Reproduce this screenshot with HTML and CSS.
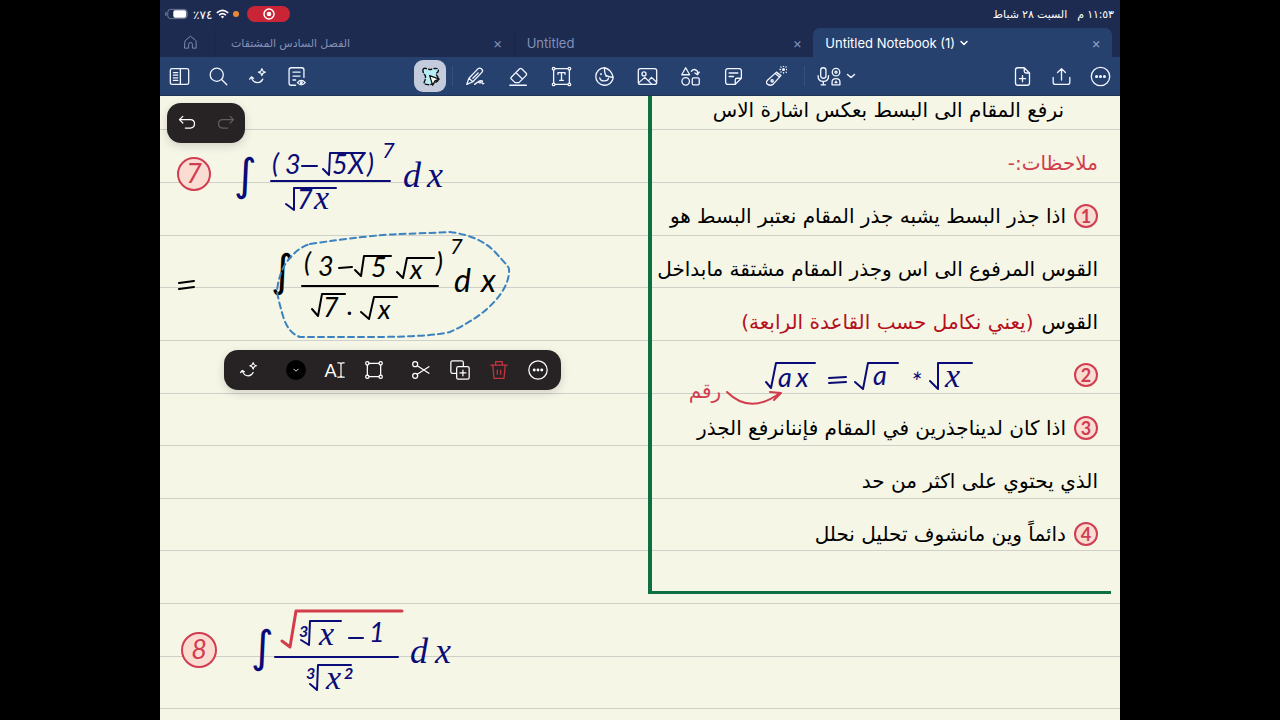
FILE: index.html
```
<!DOCTYPE html>
<html lang="ar">
<head>
  <meta charset="UTF-8">
  <meta name="viewport" content="width=device-width, initial-scale=1">
  <title>Untitled Notebook (1)</title>
  <link rel="stylesheet" href="styles.css">
</head>
<body>

  <div class="app">

    <!-- Status bar -->
    <div class="status">
      <div class="status-side">
        <svg class="battery" viewBox="0 0 26 12"><rect x="3" y="1" width="21" height="10" rx="3" fill="none" stroke="#77809a"/><rect x="9" y="2" width="14" height="8" rx="2" fill="#fff"/><path d="M1 4v4" stroke="#77809a" stroke-width="1.5"/></svg>
        <span dir="rtl">٧٤٪</span>
        <svg class="wifi" viewBox="0 0 16 12"><g fill="none" stroke="#fff" stroke-width="2"><path d="M1 4.500Q8 -1.500 15 4.500"/><path d="M3.800 7.300Q8 3.700 12.200 7.300"/></g><path d="M5.800 9.200Q8 7.600 10.200 9.200L8 11.500Z" fill="#fff"/></svg>
        <span class="dot"></span>
        <span class="rec"><svg viewBox="0 0 12 12"><circle cx="6" cy="6" r="5" fill="none" stroke="#fff" stroke-width="1.500"/><circle cx="6" cy="6" r="2.300" fill="#fff"/></svg></span>
      </div>
      <div class="status-side date" dir="rtl">
        <span>١١:٥٣ م</span>
        <span>السبت ٢٨ شباط</span>
      </div>
    </div>

    <!-- Tabs -->
    <nav class="tabs">
      <button class="home" aria-label="Home"><svg viewBox="0 0 24 24"><path d="M3 10.500Q3 9 4.500 8L12 2l7.500 6Q21 9 21 10.500V21h-6v-6a3 3 0 0 0-6 0v6H3Z"/></svg></button>
      <div class="tab">
        <a href="#" class="tab-name ar" dir="rtl">الفصل السادس المشتقات</a>
        <button class="close" aria-label="Close">×</button>
      </div>
      <div class="tab">
        <a href="#" class="tab-name">Untitled</a>
        <button class="close" aria-label="Close">×</button>
      </div>
      <div class="tab active">
        <a href="#" class="tab-name">Untitled Notebook (1)</a>
        <svg class="chevron" viewBox="0 0 10 10"><path d="m2 3.500 3 3 3-3"/></svg>
        <button class="close" aria-label="Close">×</button>
      </div>
    </nav>

    <!-- Toolbar -->
    <div class="toolbar">
      <div class="tools left">
        <button aria-label="Sidebar"><svg viewBox="0 0 24 24"><rect x="1.500" y="3" width="21" height="18" rx="2"/><path d="M13 3v18M5 7.500h5M5 10.500h5M5 13.500h5M5 16.500h5"/></svg></button>
        <button aria-label="Search"><svg viewBox="0 0 24 24"><circle cx="10" cy="10" r="7.500"/><path d="m15.500 15.500 6 6"/></svg></button>
        <button aria-label="AI"><svg viewBox="0 0 24 24"><path d="m3 15 2-2.500 2.500 1.500M5 13q2 6 7 6 4 0 6-4"/><path d="M17 3q.5 3.500 4 4-3.500.5-4 4-.5-3.500-4-4 3.500-.5 4-4Z" stroke-width="1.300"/></svg></button>
        <button aria-label="Document outline"><svg viewBox="0 0 24 24"><path d="M11 22H6a2.500 2.500 0 0 1-2.500-2.500v-15A2.500 2.500 0 0 1 6 2h12a2.500 2.500 0 0 1 2.500 2.500V13M8 7h8M8 11.500h8M8 16h3"/><path d="M13 19q4.500-5 9 0-4.500 5-9 0Z"/><circle cx="17.500" cy="19" r="1"/></svg></button>
      </div>

      <div class="tools middle">
        <button class="selected" aria-label="Lasso"><svg viewBox="0 0 24 24"><path d="M4 3q2-1 4 .5 4 1 7-.5 6-1 6 2 0 2-2 3-1 2 1 4 2 4-1 6-2 1-4 2-4 2-7 1-4 0-3-3 2-4 1-7-4-5-2-8Z" fill="#b9edf5" stroke="#111" stroke-width="1.700" stroke-dasharray="3.500 2.600"/><path d="m11 11 11 4-5 2-2.500 5Z" fill="#fff" stroke="#111" stroke-width="1.400"/></svg></button>
        <span class="sep"></span>
        <button aria-label="Pen"><svg viewBox="0 0 24 24"><path d="m2 21 2.500-7L15 3q2-1.500 4 .5T19.500 7L9 18ZM4.500 14 9 18M9 14l6-6"/><path d="M11 21q6-5 7-3 0 2-2 1t1-2q4-1 2.500 2 0 2 2 1"/></svg></button>
        <button aria-label="Eraser"><svg viewBox="0 0 24 24"><path d="m4 12.500 9-9q1.500-1.500 3 0l4.500 4.500q1.500 1.500 0 3l-8 8H8l-4-4q-1.500-1 0-2.500ZM9 7.500l7.500 7.500M2 22h19"/></svg></button>
        <button aria-label="Text box"><svg viewBox="0 0 24 24"><path d="M4 3h16M4 21h16M3 4v16M21 4v16M8 9.500V7.500h8v2M12 7.500v9M10 16.500h4"/><g fill="#27416f"><circle cx="3" cy="3" r="1.500"/><circle cx="21" cy="3" r="1.500"/><circle cx="3" cy="21" r="1.500"/><circle cx="21" cy="21" r="1.500"/></g></svg></button>
        <button aria-label="Sticker"><svg viewBox="0 0 24 24"><path d="M12 2A10 10 0 1 0 22 13Q15 12 13.500 10.500T12 2q8 2 10 11M6.500 13.500q1 4 5.500 3.500 4 0 4.500-3"/><path d="M8 9v.5M14 11v.5" stroke-width="2"/></svg></button>
        <button aria-label="Image"><svg viewBox="0 0 24 24"><rect x="1.500" y="3" width="21" height="18" rx="2.500"/><circle cx="8" cy="9" r="2.300"/><path d="m2 19 7-6 8 8M13 17l3.500-4L22 18"/></svg></button>
        <button aria-label="Shapes"><svg viewBox="0 0 24 24"><path d="m6.500 2 4.500 8H2ZM13 6q3-4 7 0v4M17 8l3 2 2-3"/><circle cx="6.500" cy="17.500" r="4.300"/><rect x="14" y="13.500" width="8" height="8" rx="1.500"/></svg></button>
        <button aria-label="Sticky note"><svg viewBox="0 0 24 24"><path d="M14 21H5.500A2.500 2.500 0 0 1 3 18.500v-13A2.500 2.500 0 0 1 5.500 3h13A2.500 2.500 0 0 1 21 5.500V14ZM14 21v-5q0-2 2-2h5M7 8h10M7 12h5"/></svg></button>
        <button aria-label="Laser"><svg viewBox="0 0 24 24"><path d="m2 16 10-9 5 4-9 10q-3 2-6 0t0-5ZM10.500 8.500l5 4"/><circle cx="7" cy="17" r="1.300"/><circle cx="20" cy="4" r="1" fill="#fff"/><path d="M20 0v.500M20 7.500v.500M16 4h.500M23.500 4h.500M17 1l.300.300M23 7l.200.200M23 1l-.2.200M17 7l.200-.2"/></svg></button>
        <span class="sep"></span>
        <button class="mic" aria-label="Record audio">
          <svg viewBox="0 0 28 24"><rect x="4.500" y="2" width="6" height="12" rx="3"/><path d="M1.500 11q0 6.500 6 6.500t6-6.500M7.500 18v3M5 21.500h5"/><circle cx="22" cy="7" r="4.300"/><circle cx="22" cy="7" r="1.200"/><path d="M17.500 21.500v-3q0-4 4.500-4t4.500 4v3Z"/><path d="M21 19h2L22 17.500Z"/></svg>
          <svg class="chevron" viewBox="0 0 10 10"><path d="m1.500 3.500 3.500 3 3.500-3"/></svg>
        </button>
      </div>

      <div class="tools right">
        <button aria-label="Add page"><svg viewBox="0 0 24 24"><path d="M14 2H6.500A2.500 2.500 0 0 0 4 4.500v15A2.500 2.500 0 0 0 6.500 22h11a2.500 2.500 0 0 0 2.500-2.500V8ZM14 2v4q0 2 2 2h4M12 11v7M8.500 14.500h7"/></svg></button>
        <button aria-label="Share"><svg viewBox="0 0 24 24"><path d="M2.500 13v5.500Q2.500 21 5 21h14q2.500 0 2.500-2.500V13M12 16V3M7.500 7.500 12 3l4.500 4.500"/></svg></button>
        <button aria-label="More"><svg viewBox="0 0 24 24"><circle cx="12" cy="12" r="10.500"/><g fill="#fff"><circle cx="7.500" cy="12" r="1"/><circle cx="12" cy="12" r="1"/><circle cx="16.500" cy="12" r="1"/></g></svg></button>
      </div>
    </div>

    <!-- Notebook page -->
    <main class="page">
      <svg class="ruling"><path d="M0 33.500H4000M0 86.500H4000M0 139.500H4000M0 191.500H4000M0 244.500H4000M0 297.500H4000M0 349.500H4000M0 402.500H4000M0 454.500H4000M0 507.500H4000M0 560.500H4000M0 612.500H4000"/></svg>

      <div class="work">
        <svg class="ink eq7" viewBox="0 0 290 84">
          <g class="num"><circle cx="24" cy="38" r="16"/><text x="24" y="47">7</text></g>
          <g class="blue">
            <text class="int" x="64" y="54">∫</text>
            <text class="big" x="102" y="37">(</text>
            <text x="115" y="38">3</text>
            <path d="M132 30h15M153 33l6 6 1-22h35M101 45h119M116 68l8 6v-22h42"/>
            <text x="162 178" y="38">5X</text>
            <text class="big" x="197" y="37">)</text>
            <text class="sup" x="212" y="22">7</text>
            <text x="127" y="73">7</text><text class="curly" x="144" y="73">x</text>
            <text class="curly dx" x="233 257" y="51">dx</text>
          </g>
        </svg>

        <svg class="ink eq7b" viewBox="0 0 350 120">
          <g class="black">
            <path d="M9 57l15-2M9 63l15-2"/>
            <text class="int" x="101" y="60">∫</text>
            <text class="big" x="134" y="46">(</text>
            <text x="148" y="50">3</text>
            <path d="M169 42l13-1M185 44l6 6 3-20h27M227 46l6 6 4-20h27M132 60h136M142 83l6 7 4-22h23M191 86l8 7 5-22h23"/>
            <text x="201" y="51">5</text>
            <text x="240" y="53">x</text>
            <text class="big" x="266" y="46">)</text>
            <text class="sup" x="280" y="28">7</text>
            <text x="153" y="91">7</text>
            <text x="177" y="89">.</text>
            <text x="208" y="93">x</text>
            <text class="dx" x="284 311" y="66">dx</text>
          </g>
          <path class="lasso" d="M140 18Q200 9 230 8T280 6Q310 10 325 26T339 43Q340 58 325 75T280 106Q260 111 200 111L130 111Q118 107 113 90T107 65Q109 45 119 33T140 18Z"/>
        </svg>

        <svg class="ink eq8" viewBox="0 0 300 100">
          <g class="num"><circle cx="29" cy="50" r="17"/><text x="29" y="59">8</text></g>
          <path class="red" d="M112 41l8 6 6-36h106"/>
          <g class="blue">
            <text class="int" x="81" y="62">∫</text>
            <text class="idx" x="129" y="37">3</text>
            <path d="M131 40l8 5 1-24h31M179 38h14M105 57h123M140 84l7 6 1-25h33"/>
            <text class="curly" x="149" y="45">x</text>
            <text x="199" y="42">1</text>
            <text class="idx" x="136" y="79">3</text>
            <text class="curly" x="156" y="89">x</text>
            <text class="idx" x="174" y="79">2</text>
            <text class="curly dx" x="240 265" y="63">dx</text>
          </g>
        </svg>

        <div class="undo">
          <button aria-label="Undo"><svg viewBox="0 0 24 24"><path d="M7 4 3 8l4 4M3 8h13q5 0 5 5t-5 5h-6"/></svg></button>
          <button aria-label="Redo" disabled><svg viewBox="0 0 24 24"><path d="m17 4 4 4-4 4M21 8H8q-5 0-5 5t5 5h6"/></svg></button>
        </div>

        <div class="menu">
          <button aria-label="AI"><svg viewBox="0 0 24 24"><path d="m2 15 2-2.500 2.500 1.500M4 13q2 6 7 6 4 0 6-4"/><path d="M17 3q.5 3.500 4 4-3.500.5-4 4-.5-3.500-4-4 3.500-.5 4-4Z" stroke-width="1.300"/></svg></button>
          <button class="after" aria-label="Colour"><svg viewBox="0 0 24 24"><circle cx="12" cy="12" r="12" fill="#000" stroke="none"/><path d="m9.500 11 2.500 2.500 2.500-2.500" stroke-width="1"/></svg></button>
          <button class="edit-text" aria-label="Convert to text">A<svg viewBox="0 0 10 24"><path d="M1 3h2q2 0 2 2v14q0 2-2 2H1M9 3H7Q5 3 5 5v14q0 2 2 2h2"/></svg></button>
          <button aria-label="Resize"><svg viewBox="0 0 24 24"><path d="M6 4h12M6 20h12M4 6v12M20 6v12"/><circle cx="4" cy="4" r="2"/><circle cx="20" cy="4" r="2"/><circle cx="4" cy="20" r="2"/><circle cx="20" cy="20" r="2"/></svg></button>
          <button class="after" aria-label="Cut"><svg viewBox="0 0 24 24"><circle cx="5" cy="5" r="3"/><circle cx="5" cy="19" r="3"/><path d="m7.500 7 14 9M7.500 17l14-9"/></svg></button>
          <button aria-label="Duplicate"><svg viewBox="0 0 24 24"><path d="M7.500 16H3a2 2 0 0 1-2-2V3a2 2 0 0 1 2-2h11a2 2 0 0 1 2 2v4.500"/><rect x="8" y="8" width="15" height="15" rx="2"/><path d="M15.500 12v7M12 15.500h7"/></svg></button>
          <button class="delete" aria-label="Delete"><svg viewBox="0 0 24 24"><path d="M2 6h20M8 6V2h8v4M4.500 6 6 22h12l1.500-16M10 12v5M14 12v5"/></svg></button>
          <button aria-label="More"><svg viewBox="0 0 24 24"><circle cx="12" cy="12" r="11"/><g fill="#fff"><circle cx="7.500" cy="12" r="1"/><circle cx="12" cy="12" r="1"/><circle cx="16.500" cy="12" r="1"/></g></svg></button>
        </div>
      </div>

      <section class="notes" dir="rtl">
        <p class="indent">نرفع المقام الى البسط بعكس اشارة الاس</p>
        <p class="title">ملاحظات:-</p>
        <p><span class="badge">1</span>اذا جذر البسط يشبه جذر المقام نعتبر البسط هو</p>
        <p>القوس المرفوع الى اس وجذر المقام مشتقة مابداخل</p>
        <p>القوس <span class="dark-red">(يعني نكامل حسب القاعدة الرابعة)</span></p>
        <div class="formula">
          <span class="badge">2</span>
          <svg class="ink" viewBox="0 0 300 44" direction="ltr">
            <g class="blue">
              <path d="M86 29l5 6 5-25h39M149 25l17-1M149 30l17-1M175 29l8 7 5-26h30M250 28l8 8V10h34"/>
              <text x="98 116" y="34">ax</text>
              <text x="193" y="32">a</text>
              <text x="231" y="39">*</text>
              <text class="curly" x="265" y="34">x</text>
            </g>
            <text class="raqm" x="25" y="45">رقم</text>
            <path class="arrow" d="M47 39q23 23 53 1M90 39l11 1-7 7"/>
          </svg>
        </div>
        <p><span class="badge">3</span>اذا كان لديناجذرين في المقام فإننانرفع الجذر</p>
        <p>الذي يحتوي على اكثر من حد</p>
        <p><span class="badge">4</span>دائماً وين مانشوف تحليل نحلل</p>
      </section>
    </main>
  </div>

</body>
</html>
```

FILE: styles.css
```
* {
  box-sizing: border-box;
}
body {
  margin: 0;
  background: #000;
  font-family: Inter, "DejaVu Sans", sans-serif;
  color: #fff;
}
button {
  background: none;
  border: none;
  padding: 0;
  color: inherit;
  font-family: inherit;
  display: flex;
  align-items: center;
  justify-content: center;
  cursor: pointer;
}
button svg, .chevron {
  width: 21px;
  height: 21px;
  fill: none;
  stroke: currentColor;
  stroke-width: 1.5;
  stroke-linecap: round;
  stroke-linejoin: round;
}
.app {
  width: 75%;
  min-height: 100vh;
  margin: 0 auto;
  display: flex;
  flex-direction: column;
  background: #1d2b50;
}

/* status bar */
.status {
  height: 28px;
  padding: 0 6px 0 5px;
  display: flex;
  justify-content: space-between;
  align-items: center;
  font-size: 12px;
}
.status-side {
  display: flex;
  align-items: center;
  gap: 4px;
}
.date {
  gap: 10px;
  font-size: 11px;
}
.battery {
  width: 24px;
  height: 12px;
}
.wifi {
  width: 13px;
  height: 10px;
}
.dot {
  width: 6px;
  height: 6px;
  border-radius: 50%;
  background: #e8883a;
}
.rec {
  width: 43px;
  height: 16px;
  margin-left: 4px;
  border-radius: 8px;
  background: #ca2536;
  display: flex;
  align-items: center;
  justify-content: center;
}
.rec svg {
  width: 12px;
  height: 12px;
}

/* tabs */
.tabs {
  height: 29px;
  padding-right: 8px;
  display: flex;
  color: #8390b8;
}
.home {
  width: 54px;
  padding-left: 6px;
}
.home svg {
  width: 15px;
  height: 15px;
}
.tab {
  flex: 1;
  display: flex;
  align-items: center;
  padding: 0 11px 0 12px;
  border-left: 1px solid #1a2646;
}
.tab-name {
  color: inherit;
  text-decoration: none;
  font-size: 13px;
}
.ar {
  margin-left: 4px;
  font-size: 11px;
}
.close {
  width: 10px;
  margin-left: auto;
  font-size: 14px;
}
.chevron {
  width: 10px;
  height: 10px;
  margin-left: 4px;
}
.active {
  background: #27416f;
  border: none;
  border-radius: 7px 7px 0 0;
  color: #fff;
}
.active .close {
  color: #93a3c8;
}

/* toolbar */
.toolbar {
  height: 39px;
  display: flex;
  align-items: center;
  background: #27416f;
  border-bottom: 1px solid #1f3258;
  color: #f0f5ff;
}
.tools {
  display: flex;
  align-items: center;
}
.left, .right {
  flex: 1;
}
.right {
  justify-content: flex-end;
}
.left button, .right button {
  width: 39px;
  height: 32px;
}
.middle button {
  width: 43px;
  height: 32px;
}
.middle .selected {
  width: 32px;
  border-radius: 9px;
  background: #c3cbdc;
}
.sep {
  width: 1px;
  height: 20px;
  margin: 0 1px 0 6px;
  background: #35507f;
}
.middle .mic {
  width: 60px;
}
.mic svg {
  width: 26px;
}
.mic .chevron {
  width: 10px;
  margin-left: 4px;
}

/* page */
.page {
  flex: 1;
  position: relative;
  display: flex;
  align-items: flex-start;
  padding-right: 9px;
  overflow: hidden;
  background: #f5f6e6;
}
.ruling {
  position: absolute;
  inset: 0;
  width: 100%;
  height: 100%;
  stroke: #cfd1c8;
}
.work {
  flex: 1;
  position: relative;
  height: 620px;
}

/* handwriting */
.ink {
  display: block;
  overflow: visible;
  font-family: Lato, "DejaVu Sans", sans-serif;
  font-size: 27px;
}
.ink path {
  fill: none;
  stroke-width: 2;
  stroke-linecap: round;
  stroke-linejoin: round;
}
.blue {
  fill: #0b0b78;
  stroke: #0b0b78;
}
.black {
  fill: #000;
  stroke: #000;
}
.ink text {
  stroke-width: 0;
  font-style: italic;
}
.ink .int {
  font-family: "DejaVu Sans", sans-serif;
  font-size: 44px;
}
.ink .curly {
  font-family: "Liberation Serif", serif;
  font-size: 34px;
}
.ink .dx {
  font-size: 36px;
}
.black .dx {
  font-size: 32px;
}
.ink .sup {
  font-size: 22px;
}
.ink .idx {
  font-size: 16px;
  font-weight: bold;
}
.num circle {
  fill: #f9ddd2;
  stroke: #d23c50;
  stroke-width: 2;
}
.num text {
  fill: #d23c50;
  text-anchor: middle;
}
.red, .arrow {
  stroke: #d23c4b;
}
.ink .red {
  stroke-width: 3;
}
.ink .raqm {
  fill: #d23c50;
  font-family: "DejaVu Sans", sans-serif;
  font-size: 20px;
  font-style: normal;
  text-anchor: middle;
}
.eq7, .eq7b, .eq8 {
  position: absolute;
  left: 10px;
}
.eq7 {
  top: 40px;
  width: 290px;
}
.eq7b {
  top: 130px;
  width: 350px;
}
.eq8 {
  top: 504px;
  width: 300px;
}
.lasso {
  stroke: #3b82c0;
  stroke-dasharray: 6 4;
}

/* floating controls */
.undo, .menu {
  position: absolute;
  display: flex;
  align-items: center;
  height: 40px;
  border-radius: 14px;
  background: #272324;
  box-shadow: 0 3px 10px rgba(0, 0, 0, 0.15);
}
.undo {
  left: 7px;
  top: 7px;
  width: 78px;
}
.undo button {
  width: 39px;
}
.undo svg {
  width: 20px;
  height: 20px;
}
.undo button:disabled {
  color: #625e5f;
}
.menu {
  left: 64px;
  top: 254px;
  width: 337px;
  padding-left: 5px;
}
.menu button {
  width: 39px;
  height: 40px;
}
.menu svg {
  width: 20px;
  height: 20px;
}
.menu .after {
  margin-left: 8px;
}
.menu .edit-text {
  font-family: Lato, sans-serif;
  font-size: 18px;
}
.menu .edit-text svg {
  width: 8px;
}
.menu .delete {
  color: #c8343f;
}

/* notes */
.notes {
  position: relative;
  width: 463px;
  padding: 0 0 31px;
  border-left: 4px solid #0c7042;
  border-bottom: 3px solid #0c7042;
  color: #000;
  font-family: "DejaVu Sans", sans-serif;
  font-size: 20px;
}
.notes p, .formula {
  height: 53px;
  margin: 0;
  padding-right: 13px;
  display: flex;
  align-items: center;
  gap: 8px;
  white-space: nowrap;
}
.notes p:first-child {
  margin-top: -13px;
}
.notes .indent {
  padding-right: 47px;
}
.notes .title {
  color: #d23c4b;
}
.dark-red {
  color: #b5101c;
}
.badge {
  width: 24px;
  height: 24px;
  border: 2px solid #d23c50;
  border-radius: 50%;
  background: #f9ddd2;
  color: #d23c50;
  font-family: Lato, sans-serif;
  font-size: 18px;
  font-weight: bold;
  line-height: 20px;
  text-align: center;
}
.formula .ink {
  width: 300px;
  margin-right: 86px;
}
```
